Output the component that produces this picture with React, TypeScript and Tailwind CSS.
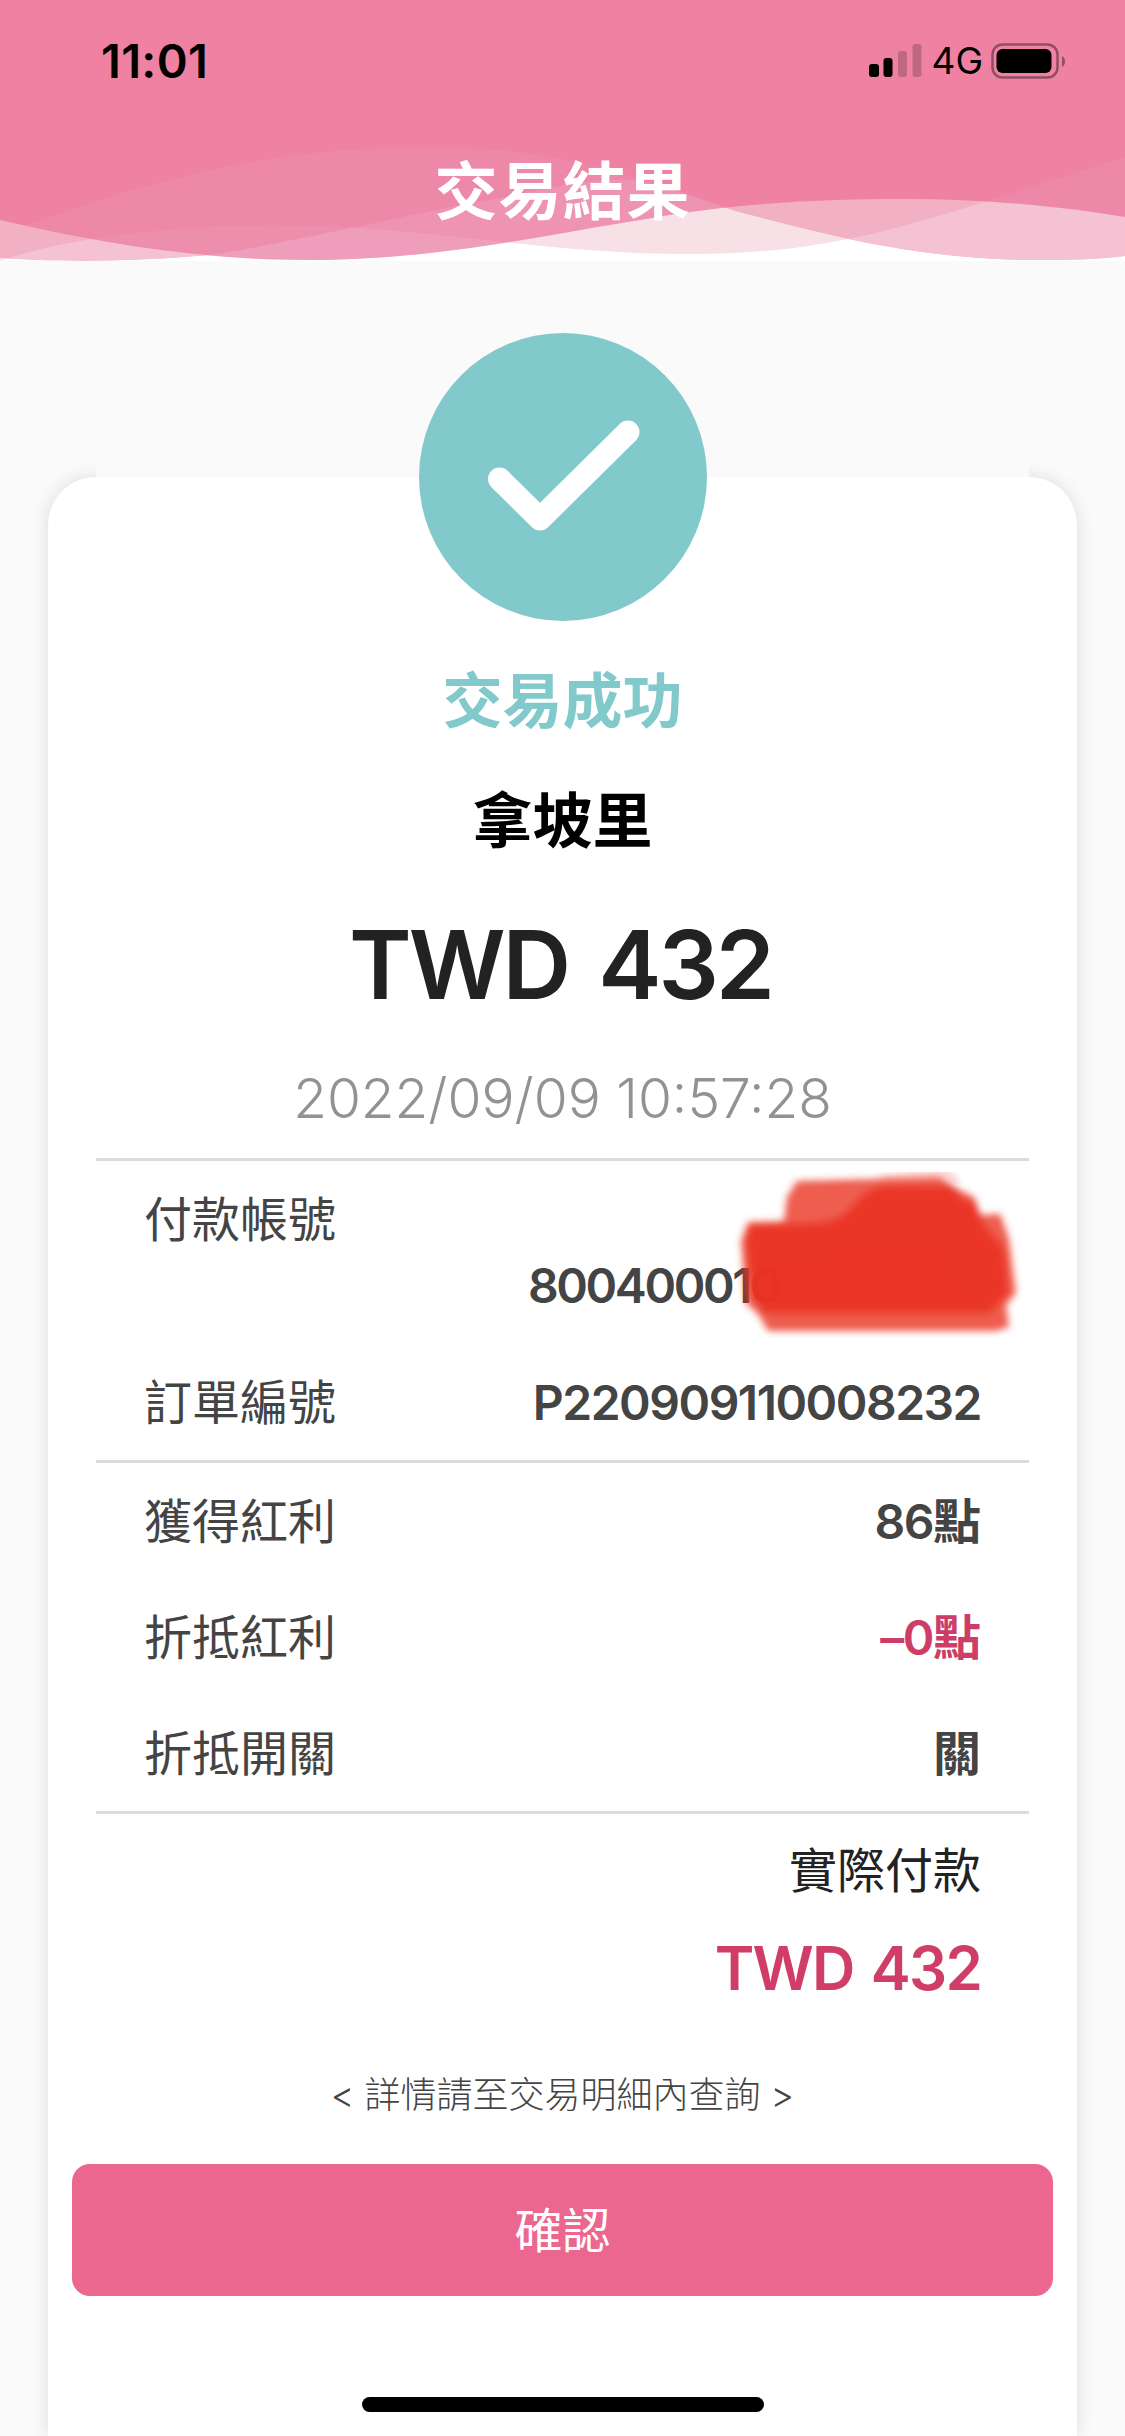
import React from "react";
import clsx from "clsx";

type RowProps = {
  label: string;
  value?: string;
  unit?: string;
  highlight?: boolean;
};

const WAVE_A =
  "M0 220 C100 243 200 260 310 260 C440 260 560 232 640 220 C740 202 830 199 905 199 C985 199 1060 206 1125 217";
const WAVE_B =
  "M0 258 C60 262 140 262 217 254 C320 237 420 211 500 198 C560 186 600 176 640 181 C680 190 700 199 735 211 C830 236 920 260 1040 260 C1075 260 1100 259 1125 256";
const WAVE_C = "M0 235 C130 188 250 147 430 147 C540 147 610 168 690 195 L735 211";
const WAVE_D =
  "M0 261 C60 240 160 225 280 225 C420 225 540 254 690 254 C850 254 930 218 1125 157";

const Waves: React.FC = () => (
  <svg className="absolute inset-0 h-[261px] w-full" viewBox="0 0 1125 261">
    <defs>
      <clipPath id="aboveA">
        <path d={`${WAVE_A} V0 H0 Z`} />
      </clipPath>
      <clipPath id="aboveB">
        <path d={`${WAVE_B} V0 H0 Z`} />
      </clipPath>
      <clipPath id="belowB">
        <path d={`${WAVE_B} V261 H0 Z`} />
      </clipPath>
    </defs>
    <rect width="1125" height="261" fill="#ffffff" />
    <path d={`${WAVE_D} V0 H0 Z`} fill="#f7e0e6" />
    <path d={`${WAVE_B} V0 H0 Z`} fill="#f2b0c5" />
    <g clipPath="url(#aboveB)">
      <path d={`${WAVE_D} V261 H0 Z`} fill="#f5c2d4" />
    </g>
    <path d={`${WAVE_A} V0 H0 Z`} fill="#ef82a2" />
    <g clipPath="url(#aboveA)">
      <path d={`${WAVE_C} V261 H0 Z`} fill="#f0c8e0" opacity="0.1" />
      <path d={`${WAVE_D} V261 H0 Z`} fill="#f0c8e0" opacity="0.1" />
      <g clipPath="url(#belowB)">
        <rect width="735" height="261" fill="#f0d0e8" opacity="0.16" />
        <path d={`${WAVE_D} V261 H0 Z`} fill="#f0d0e8" opacity="0.12" />
      </g>
    </g>
  </svg>
);

const StatusBar: React.FC = () => (
  <div className="relative flex h-[121px] items-center justify-between pl-[101px] pr-[59px] text-black">
    <span className="text-[47px] font-semibold leading-none tracking-[0.3px]">11:01</span>
    <div className="flex items-center">
      <svg className="h-[36px] w-[54px]" viewBox="0 0 54 36">
        <rect x="0" y="21" width="10" height="13" rx="3" />
        <rect x="14.500" y="15" width="9" height="19" rx="3" />
        <rect x="29" y="8" width="9" height="26" rx="3" opacity="0.2" />
        <rect x="43.500" y="1" width="9" height="33" rx="3" opacity="0.2" />
      </svg>
      <span className="ml-2 text-[37px] leading-none">4G</span>
      <svg className="ml-2 h-[36px] w-[75px]" viewBox="0 0 75 36">
        <rect x="1.500" y="1.500" width="65" height="33" rx="10" fill="none" stroke="#000" strokeWidth="2.500" opacity="0.4" />
        <rect x="5.500" y="6" width="55" height="24" rx="6" />
        <path d="M71 13 C75 15 75 22 71 24 Z" opacity="0.4" />
      </svg>
    </div>
  </div>
);

const Row: React.FC<RowProps> = ({ label, value, unit, highlight }) => (
  <div className="flex h-[116px] items-center justify-between pt-[2px]">
    <span>{label}</span>
    <span className={clsx("font-semibold tracking-[-1.5px]", highlight && "text-[#cd3d67]")}>
      {value}
      {unit && <span className="font-bold tracking-normal">{unit}</span>}
    </span>
  </div>
);

const Scribble: React.FC = () => (
  <svg className="absolute -right-[59px] top-0 h-[190px] w-[340px]" viewBox="0 0 340 190">
    <defs>
      <filter id="soft" x="-10%" y="-10%" width="120%" height="120%">
        <feGaussianBlur stdDeviation="3.5" />
      </filter>
    </defs>
    <g filter="url(#soft)" fill="#ea3323">
      <path d="M97 20 L180 18 L240 16 L258 28 L274 36 L280 54 L300 53 L309 78 L316 132 L306 144 L309 166 L296 170 L68 170 L58 153 L46 142 L41 80 L48 61 L84 60 L87 36 Z" opacity="0.8" />
      <path d="M50 64 C90 62 125 66 140 56 C160 44 160 28 186 25 L252 26 L262 38 L276 42 L282 60 C288 74 300 78 304 90 L308 132 L290 152 L64 152 L52 134 L46 80 Z" opacity="0.9" />
      <path d="M60 96 L240 90 L260 140 L62 140 Z" opacity="0.4" />
    </g>
    <path d="M180 18 L247 12 L258 22" fill="none" stroke="#ea3323" strokeWidth="5" opacity="0.3" filter="url(#soft)" />
  </svg>
);

const App: React.FC = () => {
  return (
    <div className="relative flex h-[2436px] w-[1125px] flex-col overflow-hidden bg-[#fafafa] font-['Inter','Noto_Sans_CJK_TC',sans-serif] text-[#444444]">
      <header className="relative h-[261px] shrink-0">
        <Waves />
        <StatusBar />
        <h1 className="relative mt-[38px] text-center text-[63px] font-bold leading-[64px] tracking-[1px] text-white">交易結果</h1>
      </header>

      <main className="relative mx-12 mt-[216px] flex flex-1 flex-col items-center rounded-t-[48px] bg-white shadow-[0_0_18px_rgba(0,0,0,0.12)]">
        <div className="absolute inset-x-12 -top-6 h-6 bg-[#fafafa]" />
        <svg className="relative -mt-36 size-72 shrink-0" viewBox="0 0 288 288">
          <circle cx="144" cy="144" r="144" fill="#81c9cb" />
          <path d="M80.500 146 L121 186 L209 99" fill="none" stroke="#fff" strokeWidth="23" strokeLinecap="round" strokeLinejoin="round" />
        </svg>

        <p className="mt-[50px] text-[60px] font-bold leading-[60px] text-[#81c9cb]">交易成功</p>
        <p className="mt-[60px] text-[60px] font-bold leading-[60px] text-black">拿坡里</p>
        <p className="mt-[66px] pr-[4px] text-[95px] font-semibold leading-[96px] tracking-[-3px] text-[#222222] [word-spacing:9px]">TWD 432</p>
        <p className="mt-[45px] text-[55px] font-light leading-[80px] text-[#929292]">2022/09/09 10:57:28</p>

        <section className="mt-[20px] w-[933px] border-t-[3px] border-[#dcdcdc] px-12 text-[48px] leading-[66px]">
          <div className="relative flex h-[183px] flex-col pt-[26px]">
            <span>付款帳號</span>
            <span className="pl-[384px] font-semibold tracking-[-2.4px]">800400010</span>
            <Scribble />
          </div>
          <Row label="訂單編號" value="P220909110008232" />
        </section>

        <section className="w-[933px] border-y-[3px] border-[#dcdcdc] px-12 text-[48px] leading-[66px]">
          <Row label="獲得紅利" value="86" unit="點" />
          <Row label="折抵紅利" value="–0" unit="點" highlight />
          <Row label="折抵開關" unit="關" />
        </section>

        <div className="flex w-[933px] flex-col items-end px-12">
          <p className="mt-[24px] text-[48px] leading-[66px] text-[#222222]">實際付款</p>
          <p className="mt-[28px] text-[60px] font-semibold leading-[72px] tracking-[-1.8px] text-[#d03d66] [word-spacing:4px]">TWD 432</p>
        </div>

        <p className="mt-[64px] text-[36px] font-light leading-[54px]">&lt; 詳情請至交易明細內查詢 &gt;</p>
        <button className="mt-[42px] h-[132px] w-[981px] rounded-[18px] bg-[#ec678f] pt-[2px] text-[48px] text-white">確認</button>
        <div className="mt-[101px] h-[15px] w-[402px] rounded-full bg-black" />
      </main>
    </div>
  );
};

export default App;
